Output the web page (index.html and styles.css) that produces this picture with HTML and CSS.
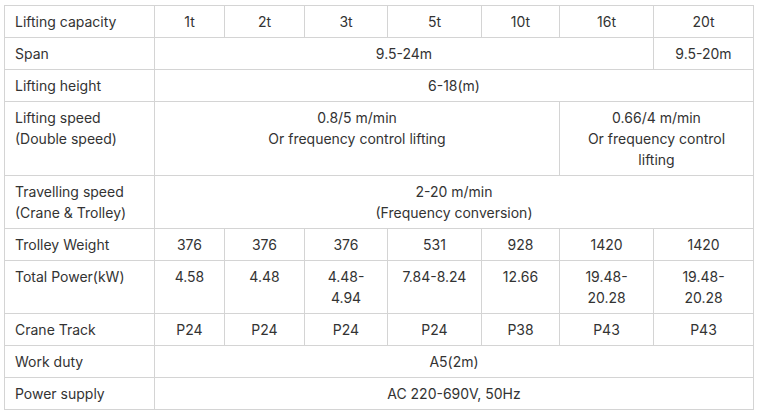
FILE: index.html
```html
<!DOCTYPE html>
<html>
<head>
<meta charset="utf-8">
<link rel="stylesheet" href="styles.css">
</head>
<body>
<table class="spec">
  <colgroup>
    <col class="c-label">
    <col class="c-1t">
    <col class="c-2t">
    <col class="c-3t">
    <col class="c-5t">
    <col class="c-10t">
    <col class="c-16t">
    <col class="c-20t">
  </colgroup>
  <tbody>
    <tr>
      <td class="label">Lifting capacity</td>
      <td>1t</td><td>2t</td><td>3t</td><td>5t</td><td>10t</td><td>16t</td><td>20t</td>
    </tr>
    <tr>
      <td class="label">Span</td>
      <td colspan="6">9.5-24m</td>
      <td>9.5-20m</td>
    </tr>
    <tr>
      <td class="label">Lifting height</td>
      <td colspan="7">6-18(m)</td>
    </tr>
    <tr>
      <td class="label">Lifting speed<br>(Double speed)</td>
      <td colspan="5">0.8/5 m/min<br>Or frequency control lifting</td>
      <td colspan="2">0.66/4 m/min<br>Or frequency control<br>lifting</td>
    </tr>
    <tr>
      <td class="label">Travelling speed<br>(Crane &amp; Trolley)</td>
      <td colspan="7">2-20 m/min<br>(Frequency conversion)</td>
    </tr>
    <tr>
      <td class="label">Trolley Weight</td>
      <td>376</td><td>376</td><td>376</td><td>531</td><td>928</td><td>1420</td><td>1420</td>
    </tr>
    <tr>
      <td class="label">Total Power(kW)</td>
      <td>4.58</td><td>4.48</td><td>4.48-<br>4.94</td><td>7.84-8.24</td><td>12.66</td><td>19.48-<br>20.28</td><td>19.48-<br>20.28</td>
    </tr>
    <tr>
      <td class="label">Crane Track</td>
      <td>P24</td><td>P24</td><td>P24</td><td>P24</td><td>P38</td><td>P43</td><td>P43</td>
    </tr>
    <tr>
      <td class="label">Work duty</td>
      <td colspan="7">A5(2m)</td>
    </tr>
    <tr>
      <td class="label">Power supply</td>
      <td colspan="7">AC 220-690V, 50Hz</td>
    </tr>
  </tbody>
</table>
</body>
</html>
```

FILE: styles.css
```css
html, body {
  margin: 0;
  padding: 0;
  background: #ffffff;
}

body {
  padding: 5px 0 0 4px;
  font-family: Inter, "Noto Sans", sans-serif;
  font-size: 14px;
  color: #333333;
}

.spec {
  border-collapse: collapse;
  table-layout: fixed;
  width: 750px;
}

.c-label { width: 150px; }
.c-1t { width: 70px; }
.c-2t { width: 80px; }
.c-3t { width: 83px; }
.c-5t { width: 94px; }
.c-10t { width: 78px; }
.c-16t { width: 94px; }
.c-20t { width: 100px; }

.spec td {
  border: 1px solid #d4d4d4;
  padding: 5px 10px;
  line-height: 21px;
  text-align: center;
  vertical-align: top;
}

.spec td.label {
  text-align: left;
}
```
